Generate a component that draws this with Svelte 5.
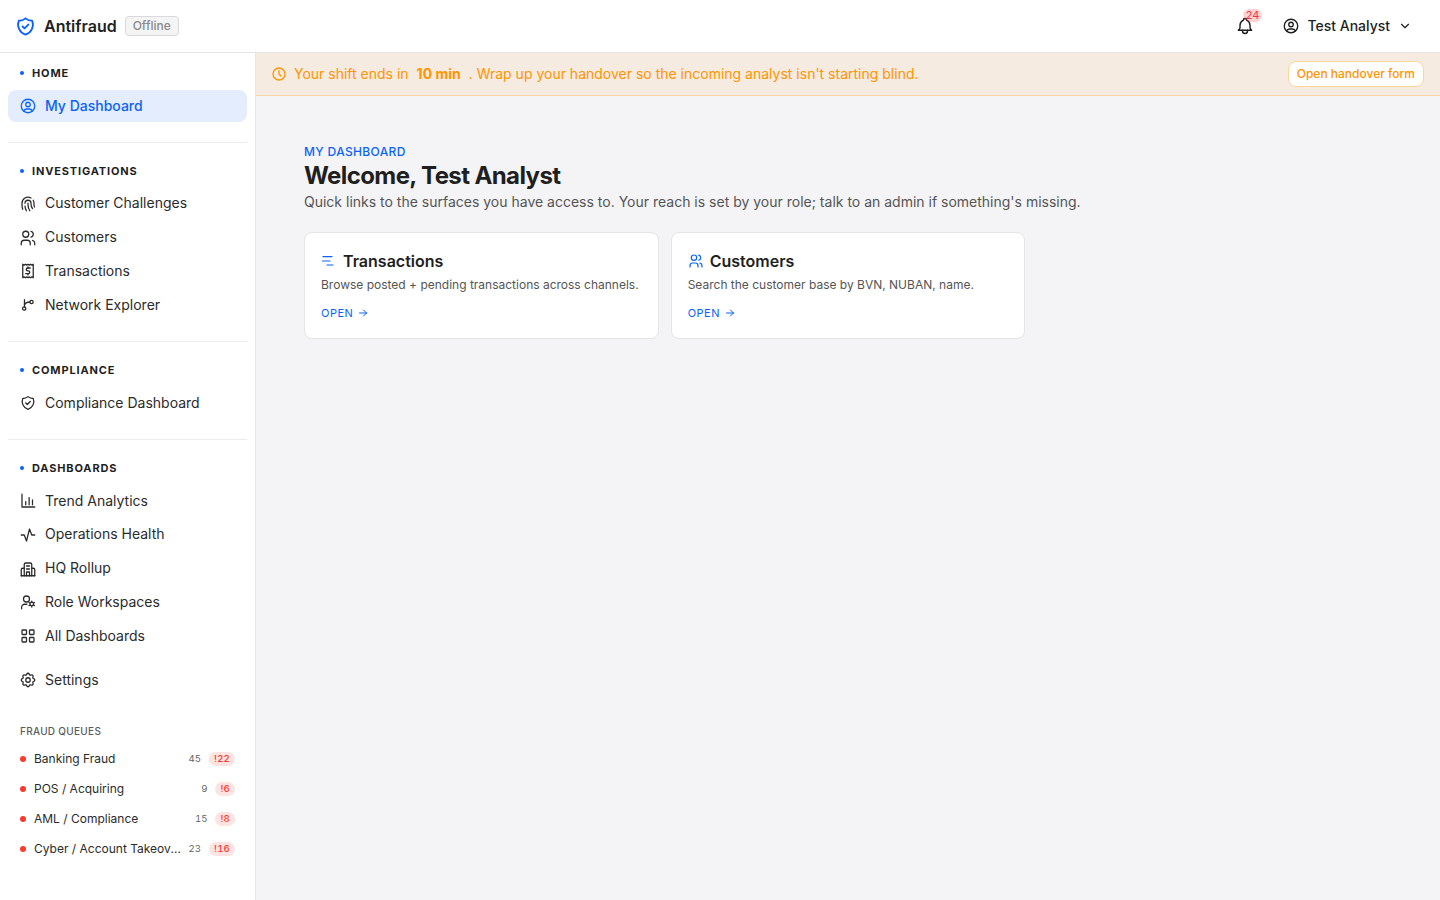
<script>
  // sidebar sections, icon names map to the paths in the snippet below
  const sections = [
    { title: 'HOME', items: [{ label: 'My Dashboard', icon: 'userCircle', active: true }] },
    {
      title: 'INVESTIGATIONS',
      items: [
        { label: 'Customer Challenges', icon: 'fingerprint' },
        { label: 'Customers', icon: 'users' },
        { label: 'Transactions', icon: 'receipt' },
        { label: 'Network Explorer', icon: 'network' }
      ]
    },
    { title: 'COMPLIANCE', items: [{ label: 'Compliance Dashboard', icon: 'shield' }] },
    {
      title: 'DASHBOARDS',
      items: [
        { label: 'Trend Analytics', icon: 'chart' },
        { label: 'Operations Health', icon: 'activity' },
        { label: 'HQ Rollup', icon: 'building' },
        { label: 'Role Workspaces', icon: 'userCog' },
        { label: 'All Dashboards', icon: 'grid' }
      ]
    }
  ];

  const queues = [
    { name: 'Banking Fraud', count: 45, alerts: 22 },
    { name: 'POS / Acquiring', count: 9, alerts: 6 },
    { name: 'AML / Compliance', count: 15, alerts: 8 },
    { name: 'Cyber / Account Takeover', count: 23, alerts: 16 }
  ];

  const cards = [
    { title: 'Transactions', text: 'Browse posted + pending transactions across channels.', icon: 'lines' },
    { title: 'Customers', text: 'Search the customer base by BVN, NUBAN, name.', icon: 'users' }
  ];

  const paths = {
    userCircle: ['M3 12a9 9 0 1 0 18 0a9 9 0 0 0 -18 0', 'M9 10a3 3 0 1 0 6 0a3 3 0 0 0 -6 0', 'M6.168 18.849a4 4 0 0 1 3.832 -2.849h4a4 4 0 0 1 3.834 2.855'],
    fingerprint: ['M18.9 7a8 8 0 0 1 1.1 5v1a6 6 0 0 0 .8 3', 'M8 11a4 4 0 0 1 8 0v1a10 10 0 0 0 2 6', 'M12 11v2a14 14 0 0 0 2.5 8', 'M8 15a18 18 0 0 0 1.8 6', 'M4.9 19a22 22 0 0 1 -.9 -7v-1a8 8 0 0 1 12 -6.95'],
    users: ['M5 7a4 4 0 1 0 8 0a4 4 0 0 0 -8 0', 'M3 21v-2a4 4 0 0 1 4 -4h4a4 4 0 0 1 4 4v2', 'M16 3.13a4 4 0 0 1 0 7.75', 'M21 21v-2a4 4 0 0 0 -3 -3.85'],
    receipt: ['M5 21v-18l1.75 1.2l1.75 -1.2l1.75 1.2l1.75 -1.2l1.75 1.2l1.75 -1.2l1.75 1.2l1.75 -1.2v18l-1.75 -1.2l-1.75 1.2l-1.75 -1.2l-1.75 1.2l-1.75 -1.2l-1.75 1.2l-1.75 -1.2z', 'M15 8h-3.5a1.75 1.75 0 0 0 0 3.8h1a1.75 1.75 0 0 1 0 3.8h-3.5', 'M12 15.6v1.6m0 -10.8v1.6'],
    network: ['M4.7 16.7a2.2 2.2 0 1 0 4.4 0a2.2 2.2 0 0 0 -4.4 0', 'M14.5 8a2.2 2.2 0 1 0 4.4 0a2.2 2.2 0 0 0 -4.4 0', 'M7.3 14.5v-9.5', 'M7.3 11.5c1 -2 4 -3.5 7.2 -3.5'],
    shield: ['M12 3.5a11 11 0 0 0 7 2.5a11 11 0 0 1 -7 14.5a11 11 0 0 1 -7 -14.5a11 11 0 0 0 7 -2.5', 'M9 12l2 2l4 -4'],
    chart: ['M4 3v17h17', 'M9 17v-4', 'M13.5 17v-9.5', 'M18 17v-6.5'],
    activity: ['M3 12h4l3 8l4 -16l3 8h4'],
    building: ['M3 21h18', 'M7 21v-15a2 2 0 0 1 2 -2h6a2 2 0 0 1 2 2v15', 'M7 11h-2a2 2 0 0 0 -2 2v8', 'M17 11h2a2 2 0 0 1 2 2v8', 'M10 8h4', 'M10 12h4', 'M10 21v-5h4v5'],
    userCog: ['M6 8a4 4 0 1 0 8 0a4 4 0 0 0 -8 0', 'M3.5 21v-2a4 4 0 0 1 4 -4h3', 'M14.6 14.7a2.4 2.4 0 1 0 4.8 0a2.4 2.4 0 0 0 -4.8 0', 'M17 10.7v1.3', 'M17 17.4v1.3', 'M13.4 12.6l1.1 .7', 'M19.5 16.1l1.1 .7', 'M13.4 16.8l1.1 -.7', 'M19.5 13.3l1.1 -.7'],
    grid: ['M4 5a1 1 0 0 1 1 -1h4a1 1 0 0 1 1 1v4a1 1 0 0 1 -1 1h-4a1 1 0 0 1 -1 -1z', 'M14 5a1 1 0 0 1 1 -1h4a1 1 0 0 1 1 1v4a1 1 0 0 1 -1 1h-4a1 1 0 0 1 -1 -1z', 'M4 15a1 1 0 0 1 1 -1h4a1 1 0 0 1 1 1v4a1 1 0 0 1 -1 1h-4a1 1 0 0 1 -1 -1z', 'M14 15a1 1 0 0 1 1 -1h4a1 1 0 0 1 1 1v4a1 1 0 0 1 -1 1h-4a1 1 0 0 1 -1 -1z'],
    settings: ['M10.325 4.317c.426 -1.756 2.924 -1.756 3.35 0a1.724 1.724 0 0 0 2.573 1.066c1.543 -.94 3.31 .826 2.37 2.37a1.724 1.724 0 0 0 1.065 2.572c1.756 .426 1.756 2.924 0 3.35a1.724 1.724 0 0 0 -1.066 2.573c.94 1.543 -.826 3.31 -2.37 2.37a1.724 1.724 0 0 0 -2.572 1.065c-.426 1.756 -2.924 1.756 -3.35 0a1.724 1.724 0 0 0 -2.573 -1.066c-1.543 .94 -3.31 -.826 -2.37 -2.37a1.724 1.724 0 0 0 -1.065 -2.572c-1.756 -.426 -1.756 -2.924 0 -3.35a1.724 1.724 0 0 0 1.066 -2.573c-.94 -1.543 .826 -3.31 2.37 -2.37c1 .608 2.296 .07 2.572 -1.065', 'M9 12a3 3 0 1 0 6 0a3 3 0 0 0 -6 0'],
    bell: ['M10 5a2 2 0 1 1 4 0a7 7 0 0 1 4 6v3a4 4 0 0 0 2 3h-16a4 4 0 0 0 2 -3v-3a7 7 0 0 1 4 -6', 'M9 17v1a3 3 0 0 0 6 0v-1'],
    chevron: ['M6 9l6 6l6 -6'],
    clock: ['M3 12a9 9 0 1 0 18 0a9 9 0 0 0 -18 0', 'M12 7v5l3 3'],
    arrow: ['M5 12h14', 'M13 18l6 -6', 'M13 6l6 6'],
    lines: ['M3 5.5h13.5', 'M2 12h11.5', 'M9 18h9']
  };
</script>

{#snippet icon(name, size = 18, width = 1.7)}
  <svg class="icon" viewBox="0 0 24 24" width={size} height={size} fill="none" stroke="currentColor" stroke-width={width} stroke-linecap="round" stroke-linejoin="round">
    {#each paths[name] as d}
      <path {d} />
    {/each}
  </svg>
{/snippet}

<div class="shell">
  <header class="topbar">
    <div class="brand">
      <span class="logo">{@render icon('shield', 23, 1.9)}</span>
      <span class="name">Antifraud</span>
      <span class="offline">Offline</span>
    </div>
    <div class="top-right">
      <div class="bell">
        {@render icon('bell', 20, 1.7)}
        <span class="bell-count">24</span>
      </div>
      <div class="user">
        {@render icon('userCircle', 18, 1.8)}
        <span>Test Analyst</span>
        {@render icon('chevron', 14, 2)}
      </div>
    </div>
  </header>

  <div class="body">
    <aside class="sidebar">
      {#each sections as section, i}
        <section class="nav-section" class:last={i === sections.length - 1}>
          <div class="section-title"><span class="dot"></span>{section.title}</div>
          <div class="nav-list">
            {#each section.items as item}
              <div class="nav-item" class:active={item.active}>
                {@render icon(item.icon)}
                <span>{item.label}</span>
              </div>
            {/each}
          </div>
        </section>
      {/each}

      <div class="nav-item">
        {@render icon('settings')}
        <span>Settings</span>
      </div>

      <div class="queues">
        <div class="queues-title">FRAUD QUEUES</div>
        {#each queues as q}
          <div class="queue">
            <span class="queue-dot"></span>
            <span class="queue-name">{q.name}</span>
            <span class="queue-count">{q.count}</span>
            <span class="queue-alert">!{q.alerts}</span>
          </div>
        {/each}
      </div>
    </aside>

    <main class="main">
      <div class="banner">
        <div class="banner-text">
          {@render icon('clock', 16, 2)}
          <span>Your shift ends in</span>
          <strong>10 min</strong>
          <span>. Wrap up your handover so the incoming analyst isn't starting blind.</span>
        </div>
        <button class="handover">Open handover form</button>
      </div>

      <div class="content">
        <div class="eyebrow">MY DASHBOARD</div>
        <h1>Welcome, Test Analyst</h1>
        <p class="lead">Quick links to the surfaces you have access to. Your reach is set by your role; talk to an admin if something's missing.</p>

        <div class="cards">
          {#each cards as card}
            <div class="card">
              <div class="card-head">
                <span class="card-icon">{@render icon(card.icon, 16, 1.8)}</span>
                <span class="card-title">{card.title}</span>
              </div>
              <p class="card-text">{card.text}</p>
              <div class="open">OPEN {@render icon('arrow', 12, 2)}</div>
            </div>
          {/each}
        </div>
      </div>
    </main>
  </div>
</div>

<style>
  :global(body) {
    margin: 0;
    font-family: Inter, "Liberation Sans", sans-serif;
    color: #1f1f1f;
    background: #fff;
  }

  .shell {
    height: 900px;
    display: flex;
    flex-direction: column;
    overflow: hidden;
  }

  .icon {
    display: block;
    flex-shrink: 0;
  }

  /* Top bar */
  .topbar {
    height: 52px;
    flex-shrink: 0;
    display: flex;
    align-items: center;
    justify-content: space-between;
    padding: 0 28px 0 16px;
    border-bottom: 1px solid #e5e5e8;
  }
  .brand {
    display: flex;
    align-items: center;
  }
  .logo {
    color: #0b63f6;
    margin: 0 7px 0 -2px;
  }
  .name {
    font-size: 16px;
    font-weight: 600;
    margin-right: 8px;
  }
  .offline {
    font-size: 12px;
    font-weight: 500;
    color: #8a8a8a;
    background: #f4f4f5;
    border: 1px solid #d9d9dc;
    border-radius: 4px;
    padding: 1px 7px;
    line-height: 16px;
  }
  .top-right {
    display: flex;
    align-items: center;
    gap: 27px;
  }
  .bell {
    position: relative;
    display: flex;
  }
  .bell-count {
    position: absolute;
    top: -7px;
    right: -7px;
    background: rgba(245, 51, 63, 0.22);
    color: #f5333f;
    font-size: 11px;
    line-height: 13px;
    padding: 0 3px;
    border-radius: 7px;
  }
  .user {
    display: flex;
    align-items: center;
    gap: 7px;
    font-size: 14px;
    font-weight: 500;
  }
  .user span {
    margin: 0 1px 1px 0;
  }

  .body {
    flex: 1;
    display: flex;
    min-height: 0;
  }

  /* Sidebar */
  .sidebar {
    width: 239px;
    flex-shrink: 0;
    border-right: 1px solid #e5e5e8;
    padding: 12px 8px 0;
  }
  .nav-section {
    border-bottom: 1px solid #ececee;
    padding-bottom: 20px;
    margin-bottom: 19.9px;
  }
  .nav-section.last {
    border-bottom: none;
    padding-bottom: 0;
    margin-bottom: 11.7px;
  }
  .section-title {
    display: flex;
    align-items: center;
    gap: 8px;
    padding-left: 12px;
    height: 16px;
    font-size: 11px;
    font-weight: 700;
    letter-spacing: 0.85px;
    margin-bottom: 9px;
  }
  .dot {
    width: 4px;
    height: 4px;
    border-radius: 50%;
    background: #0b63f6;
  }
  .nav-list {
    display: flex;
    flex-direction: column;
    gap: 1.8px;
  }
  .nav-item {
    display: flex;
    align-items: center;
    gap: 8.5px;
    height: 32px;
    padding: 0 10.5px;
    font-size: 14px;
    border-radius: 8px;
    color: #2b2b2b;
  }
  .nav-item span {
    margin-bottom: 1.8px;
  }
  .nav-item.active {
    background: #e3edfd;
    color: #0b63f6;
    font-weight: 500;
  }

  /* Queues */
  .queues {
    margin-top: 27px;
    padding: 0 12px;
  }
  .queues-title {
    font-size: 10px;
    font-weight: 500;
    letter-spacing: 0.3px;
    color: #5c5c5c;
    margin-bottom: 5px;
    line-height: 16px;
  }
  .queue {
    display: flex;
    align-items: center;
    height: 30px;
    font-size: 12px;
  }
  .queue-dot {
    width: 6px;
    height: 6px;
    border-radius: 50%;
    background: #fa3a2f;
    margin-right: 8px;
    flex-shrink: 0;
  }
  .queue-name {
    flex: 1;
    min-width: 0;
    white-space: nowrap;
    overflow: hidden;
    text-overflow: ellipsis;
    color: #2b2b2b;
  }
  .queue-count {
    font-size: 9.6px;
    color: #666;
    margin: 0 8px 0 7px;
    font-variant-numeric: tabular-nums;
  }
  .queue-alert {
    font-size: 9.6px;
    font-weight: 500;
    letter-spacing: 0.2px;
    color: #fa3a2f;
    background: #fde3e1;
    border-radius: 7px;
    line-height: 14px;
    padding: 0 5px;
    font-variant-numeric: tabular-nums;
  }

  /* Main area */
  .main {
    flex: 1;
    background: #f4f4f6;
    min-width: 0;
  }
  .banner {
    height: 42px;
    display: flex;
    align-items: center;
    justify-content: space-between;
    padding: 0 16px 0 15px;
    background: #f5ebe0;
    border-bottom: 1px solid #f5d5a8;
    color: #ff9500;
  }
  .banner-text {
    display: flex;
    align-items: center;
    gap: 8px;
    font-size: 14px;
  }
  .banner-text .icon {
    margin-right: -1px;
  }
  .banner-text span,
  .banner-text strong {
    margin-bottom: 2px;
  }
  .banner-text strong {
    font-weight: 700;
  }
  .handover {
    font-family: inherit;
    font-size: 12px;
    font-weight: 500;
    color: #ff9500;
    background: #fff;
    border: 1px solid #fdd596;
    border-radius: 8px;
    height: 26px;
    padding: 0 8px 2px;
  }

  .content {
    padding: 48px;
  }
  .eyebrow {
    font-size: 12px;
    font-weight: 500;
    letter-spacing: 0.35px;
    color: #0b63f6;
    line-height: 16px;
  }
  h1 {
    margin: 0;
    font-size: 24px;
    font-weight: 700;
    line-height: 32px;
    letter-spacing: -0.6px;
  }
  .lead {
    margin: 0;
    font-size: 14px;
    line-height: 20px;
    color: #555;
  }
  .cards {
    display: flex;
    gap: 12px;
    margin-top: 20px;
  }
  .card {
    background: #fff;
    border: 1px solid #e5e5e8;
    border-radius: 8px;
    padding: 16px;
    height: 73px;
    width: 320.67px;
  }
  .card-head {
    display: flex;
    align-items: center;
    gap: 6px;
    height: 24px;
  }
  .card-icon {
    color: #0b63f6;
  }
  .card-title {
    font-size: 16px;
    font-weight: 600;
  }
  .card-text {
    margin: 3px 0 0;
    font-size: 12px;
    line-height: 18px;
    color: #555;
  }
  .open {
    display: flex;
    align-items: center;
    gap: 4px;
    margin-top: 11px;
    font-size: 11px;
    letter-spacing: 0.5px;
    color: #0b63f6;
    line-height: 16px;
  }
</style>
